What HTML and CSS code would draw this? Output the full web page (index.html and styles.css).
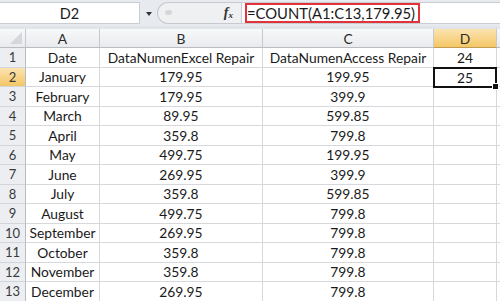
FILE: index.html
```html
<!DOCTYPE html>
<html>
<head>
<meta charset="utf-8">
<link rel="stylesheet" href="styles.css">
</head>
<body>
<div class="app">
  <div class="fbar">
    <div class="namebox">D2</div>
    <div class="dd"><span class="tri"></span></div>
    <div class="grip"><span class="dot"></span><span class="fx">f<sub>x</sub></span></div>
    <div class="input"><span class="formula">=COUNT(A1:C13,179.95)</span></div>
  </div>
  <div class="gap"></div>
  <div class="sheet">
    <div class="hd corner"><span class="sel"></span></div>
    <div class="hd">A</div><div class="hd">B</div><div class="hd">C</div><div class="hd on">D</div><div class="hd"></div>

    <div class="rh">1</div><div class="c">Date</div><div class="c">DataNumenExcel Repair</div><div class="c">DataNumenAccess Repair</div><div class="c">24</div><div class="c"></div>
    <div class="rh on">2</div><div class="c">January</div><div class="c">179.95</div><div class="c">199.95</div><div class="c act">25<span class="handle"></span></div><div class="c"></div>
    <div class="rh">3</div><div class="c">February</div><div class="c">179.95</div><div class="c">399.9</div><div class="c"></div><div class="c"></div>
    <div class="rh">4</div><div class="c">March</div><div class="c">89.95</div><div class="c">599.85</div><div class="c"></div><div class="c"></div>
    <div class="rh">5</div><div class="c">April</div><div class="c">359.8</div><div class="c">799.8</div><div class="c"></div><div class="c"></div>
    <div class="rh">6</div><div class="c">May</div><div class="c">499.75</div><div class="c">199.95</div><div class="c"></div><div class="c"></div>
    <div class="rh">7</div><div class="c">June</div><div class="c">269.95</div><div class="c">399.9</div><div class="c"></div><div class="c"></div>
    <div class="rh">8</div><div class="c">July</div><div class="c">359.8</div><div class="c">599.85</div><div class="c"></div><div class="c"></div>
    <div class="rh">9</div><div class="c">August</div><div class="c">499.75</div><div class="c">799.8</div><div class="c"></div><div class="c"></div>
    <div class="rh">10</div><div class="c">September</div><div class="c">269.95</div><div class="c">799.8</div><div class="c"></div><div class="c"></div>
    <div class="rh">11</div><div class="c">October</div><div class="c">359.8</div><div class="c">799.8</div><div class="c"></div><div class="c"></div>
    <div class="rh">12</div><div class="c">November</div><div class="c">359.8</div><div class="c">799.8</div><div class="c"></div><div class="c"></div>
    <div class="rh">13</div><div class="c">December</div><div class="c">269.95</div><div class="c">799.8</div><div class="c"></div><div class="c"></div>
  </div>
</div>
</body>
</html>
```
FILE: styles.css
```css
html, body { margin: 0; padding: 0; background: #fff; }
body { width: 500px; height: 301px; overflow: hidden; font-family: Lato, "Liberation Sans", sans-serif; color: #1a1a1a; }
.app { width: 500px; }
.fbar { display: flex; height: 22px; padding: 2px 0 2px 0; background: #e7eaee; }
.namebox { width: 140px; background: #fff; border: 1px solid #c9cdd2; border-left: none; box-sizing: border-box; display: flex; align-items: center; justify-content: center; font-size: 14.5px; }
.dd { width: 17px; display: flex; align-items: center; justify-content: center; }
.tri { width: 0; height: 0; border-left: 3.5px solid transparent; border-right: 3.5px solid transparent; border-top: 4px solid #333; margin-top: 1px; }
.grip { width: 84px; position: relative; background: #eef0f2; border: 1px solid #c6cacf; border-right: none; border-radius: 11px 0 0 11px; box-sizing: border-box; display: flex; align-items: center; justify-content: flex-end; padding-right: 8px; }
.dot { position: absolute; left: 7px; top: 7px; width: 7px; height: 5px; border-radius: 50%; background: #d3d6da; }
.fx { font-family: "Liberation Serif", serif; font-style: italic; font-weight: bold; font-size: 14px; color: #333; }
.fx sub { font-size: 9px; vertical-align: -1px; }
.input { flex: 1; background: #fff; border: 1px solid #c9cdd2; border-right: none; box-sizing: border-box; display: flex; align-items: center; padding-left: 3px; }
.formula { border: 2px solid #e0343a; padding: 0 3px 0 0; font-size: 14.8px; line-height: 16px; }
.gap { height: 3px; background: #e1e4e8; }
.sheet { display: grid; grid-template-columns: 26px 74px 163px 171px 63px 20px; grid-template-rows: 19px repeat(13, 19.5px); font-size: 13.8px; }
.hd { background: linear-gradient(#f7f8f9, #e9ebee); border-right: 1px solid #c5c8cc; border-bottom: 1px solid #b8bcc1; box-sizing: border-box; display: flex; align-items: center; justify-content: center; color: #2b2b2b; }
.hd.on { background: linear-gradient(#fbe3b0, #f4c766); border-bottom-color: #c29a50; }
.corner { position: relative; }
.sel { position: absolute; right: 3px; bottom: 3px; width: 0; height: 0; border-left: 12px solid transparent; border-bottom: 12px solid #d4d7db; }
.rh { background: #eceef1; border-right: 1px solid #b8bcc1; border-bottom: 1px solid #d2d5d9; box-sizing: border-box; display: flex; align-items: center; justify-content: center; color: #3a3a3a; font-size: 13px; }
.rh.on { background: linear-gradient(#fbe3b0, #f4c766); }
.c { border-right: 1px solid #d6d8db; border-bottom: 1px solid #d6d8db; box-sizing: border-box; display: flex; align-items: center; justify-content: center; white-space: nowrap; overflow: hidden; }
.c.act { position: relative; overflow: visible; border: 2px solid #111; margin: -1px 0 -1px -1px; }
.handle { position: absolute; right: -4px; bottom: -4px; width: 5px; height: 5px; background: #111; border: 1px solid #fff; }
```
